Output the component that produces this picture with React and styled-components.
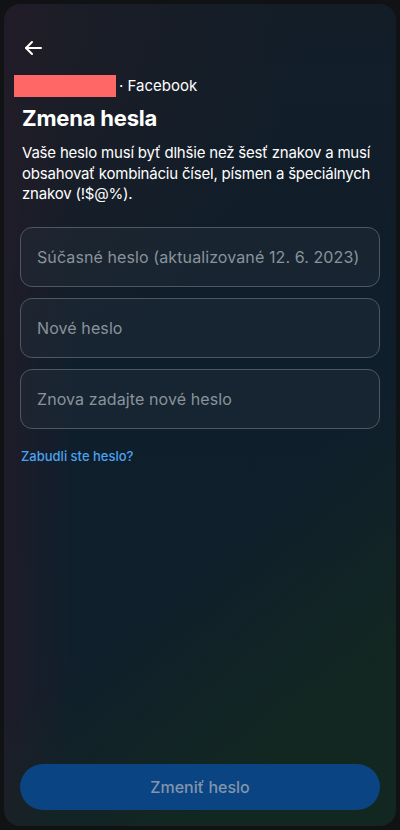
import React from 'react'
import styled, { createGlobalStyle } from 'styled-components'

const GlobalStyle = createGlobalStyle`
  html, body {
    margin: 0;
    padding: 0;
    background: #111213;
  }
  body {
    font-family: Inter, "Noto Sans", "Liberation Sans", sans-serif;
    -webkit-font-smoothing: antialiased;
  }
`

const Screen = styled.div`
  width: 400px;
  height: 830px;
  padding: 4px;
  box-sizing: border-box;
  background: #111213;
`

const Card = styled.div`
  height: 100%;
  border-radius: 16px;
  box-sizing: border-box;
  padding: 0 16px 16px;
  display: flex;
  flex-direction: column;
  overflow: hidden;
  background:
    linear-gradient(140deg, rgba(19, 38, 32, 0) 62%, rgba(19, 40, 32, 0.9) 85%),
    linear-gradient(90deg, rgba(34, 28, 40, 0.75) 0px, rgba(34, 28, 40, 0) 70px),
    radial-gradient(ellipse 75% 45% at 0% 0%, rgba(30, 29, 38, 1), rgba(30, 29, 38, 0) 100%),
    linear-gradient(180deg, #121d28 0%, #0f1e2b 45%, #101f2c 100%);
`

const TopBar = styled.div`
  height: 54px;
  display: flex;
  align-items: flex-end;
  padding-left: 3px;
  color: #ffffff;
`

const BackButton = styled.button`
  background: none;
  border: 0;
  padding: 0;
  width: 20px;
  height: 20px;
  color: #ffffff;
  display: flex;
  align-items: center;
  justify-content: center;
`

const Account = styled.div`
  margin-top: 17px;
  margin-left: -6px;
  display: flex;
  align-items: center;
  gap: 3px;
  color: #ffffff;
  font-size: 15px;
  line-height: 22px;
`

const Redacted = styled.span`
  display: inline-block;
  width: 102px;
  height: 22px;
  background: #ff6666;
`

const Title = styled.h1`
  margin: 7px 0 0 2px;
  color: #ffffff;
  font-size: 22px;
  font-weight: 700;
  line-height: 28px;
  letter-spacing: -0.2px;
`

const Description = styled.p`
  margin: 11px 0 0 2px;
  color: #ffffff;
  font-size: 15px;
  line-height: 20.5px;
  letter-spacing: -0.2px;
`

const Fields = styled.div`
  margin-top: 22px;
  display: flex;
  flex-direction: column;
  gap: 11px;
`

const Field = styled.input`
  box-sizing: border-box;
  width: 100%;
  height: 60px;
  border-radius: 12px;
  border: 1px solid #4d5863;
  background: rgba(40, 52, 62, 0.35);
  padding: 0 16px;
  font-family: inherit;
  font-size: 16px;
  letter-spacing: 0.1px;
  color: #ffffff;
  outline: none;
  &::placeholder {
    color: #8a939b;
  }
`

const ForgotLink = styled.a`
  margin: 18px 0 0 1px;
  color: #4aa3f0;
  font-size: 13px;
  font-weight: 500;
  line-height: 18px;
  text-decoration: none;
  align-self: flex-start;
`

const Spacer = styled.div`
  flex: 1;
`

const SubmitButton = styled.button`
  height: 46px;
  border: 0;
  border-radius: 23px;
  background: #0b4482;
  color: #8195ad;
  font-family: inherit;
  font-size: 16px;
  font-weight: 500;
`

export default function App() {
  return (
    <Screen>
      <GlobalStyle />
      <Card>
        <TopBar>
          <BackButton aria-label="Späť">
            <svg width="18" height="16" viewBox="0 0 18 16" fill="none" stroke="currentColor" strokeWidth="2" strokeLinecap="round" strokeLinejoin="round">
              <path d="M17 8H2" />
              <path d="M8 2L2 8l6 6" />
            </svg>
          </BackButton>
        </TopBar>
        <Account>
          <Redacted />
          <span>· Facebook</span>
        </Account>
        <Title>Zmena hesla</Title>
        <Description>
          Vaše heslo musí byť dlhšie než šesť znakov a musí obsahovať kombináciu čísel, písmen a špeciálnych znakov (!$@%).
        </Description>
        <Fields>
          <Field type="password" placeholder="Súčasné heslo (aktualizované 12. 6. 2023)" />
          <Field type="password" placeholder="Nové heslo" />
          <Field type="password" placeholder="Znova zadajte nové heslo" />
        </Fields>
        <ForgotLink href="#">Zabudli ste heslo?</ForgotLink>
        <Spacer />
        <SubmitButton>Zmeniť heslo</SubmitButton>
      </Card>
    </Screen>
  )
}
